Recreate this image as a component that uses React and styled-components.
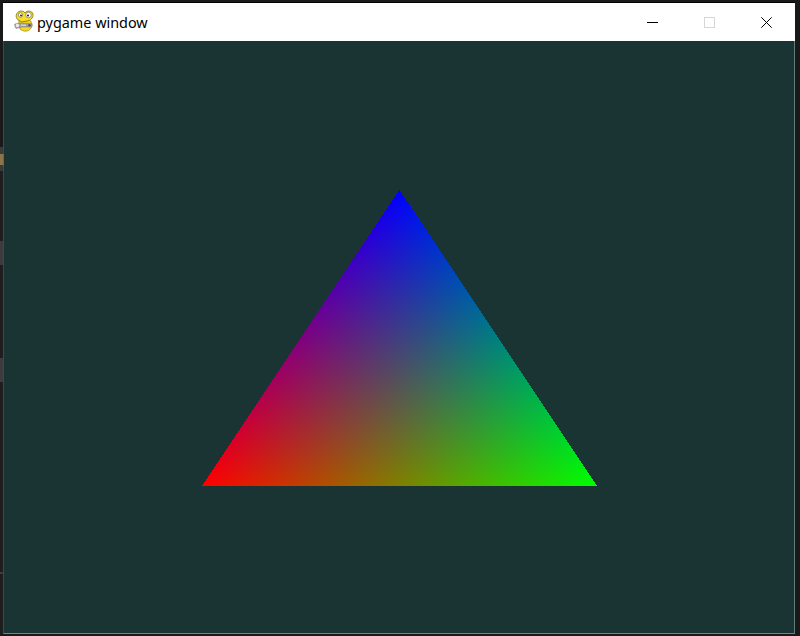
import React from "react";
import styled, {createGlobalStyle} from "styled-components";

const Global = createGlobalStyle`
    html, body { margin: 0; padding: 0; background: #1a1a1a; }
    body { font-family: "Noto Sans", "Open Sans", sans-serif; }
`

const Desktop = styled.div`
    width: 800px;
    height: 636px;
    display: flex;
    padding: 3px 5px 2px 0;
    box-sizing: border-box;
    background: #191919;
    overflow: hidden;
`
const BehindEdge = styled.div`
    width: 3px;
    flex: none;
    display: flex;
    flex-direction: column;
`
const EdgePiece = styled.div`
    height: ${p => p.$h}px;
    flex: none;
    background: ${p => p.$color};
`
const Win = styled.div`
    position: relative;
    flex: 1;
    display: flex;
    flex-direction: column;
    min-width: 0;
    border-left: 1px solid #2c5050;
    border-right: 1px solid #5f7d7c;
    border-bottom: 1px solid #6b8987;
    box-shadow: 0 -1px 0 #000;
`
const BorderGlint = styled.div`
    position: absolute;
    left: -1px;
    top: 151px;
    width: 1px;
    height: 12px;
    background: #3f6f8c;
`
const TitleBar = styled.div`
    height: 38px;
    flex: none;
    margin-left: -1px;
    margin-right: -1px;
    display: flex;
    align-items: center;
    background: #fff;
    padding-left: 11px;
`
const AppIcon = styled.svg`
    width: 20px;
    height: 22px;
    flex: none;
    margin-top: -2px;
`
const Title = styled.span`
    margin-left: 3px;
    font-size: 14.4px;
    color: #000;
    flex: 1;
`
const CaptionButton = styled.div`
    width: 57px;
    height: 38px;
    flex: none;
    display: flex;
    align-items: center;
    justify-content: center;
    svg { width: 11px; height: 11px; display: block; }
`
const Canvas = styled.div`
    flex: 1;
    display: flex;
    align-items: center;
    justify-content: center;
    padding: 2px 0 0 1px;
    background: #1a3333;
`
const Triangle = styled.svg`
    width: 395px;
    height: 296px;
    display: block;
    isolation: isolate;
    polygon { mix-blend-mode: plus-lighter; }
`

const edges = [
    {h: 144, color: "#191919"},
    {h: 7, color: "#3a3a3c"},
    {h: 11, color: "#8f7448"},
    {h: 6, color: "#3a3a3c"},
    {h: 70, color: "#1e1e1e"},
    {h: 24, color: "#3c3c3e"},
    {h: 93, color: "#1e1e1e"},
    {h: 24, color: "#3c3c3e"},
    {h: 190, color: "#1e1e1e"},
    {h: 2, color: "#3c3c3e"},
    {h: 60, color: "#1e1e1e"},
]

const POINTS = "197.5,0 0,296 395,296"

export default function App(){
    return(
    <>
    <Global/>
    <Desktop>
        <BehindEdge>
            {edges.map((e, i) => <EdgePiece key={i} $h={e.h} $color={e.color}/>)}
        </BehindEdge>
        <Win>
            <BorderGlint/>
            <TitleBar>
                <AppIcon viewBox="0 0 20 22">
                    <path d="M5 15 C4 11 6 9 8 9 L14 9 C18 11 19 15 17 18 C15 22 9 22 6 19 Z" fill="#f6d91c" stroke="#8a7410" strokeWidth=".6"/>
                    <path d="M4 10 C1 7 2 3 5 1.5 C7 .5 10 1 11 3 C13 0 18 .5 19 4 C19.5 8 16 11 13 11 L8 12 Z" fill="#f8e020" stroke="#6e5c0c" strokeWidth=".7"/>
                    <circle cx="6.5" cy="5" r="2.2" fill="#fff" stroke="#444" strokeWidth=".5"/>
                    <circle cx="14.5" cy="5" r="2.8" fill="#fff" stroke="#444" strokeWidth=".5"/>
                    <circle cx="7" cy="5.4" r=".9" fill="#111"/>
                    <circle cx="14" cy="5.4" r="1" fill="#111"/>
                    <path d="M.8 14 L6 13 L17 13.5 C18.5 14 18.5 16 17.5 17 L8 17 L2 18.5 C1 17.5 .4 15 .8 14 Z" fill="#a3a19b" stroke="#6a6864" strokeWidth=".4"/>
                    <circle cx="3.4" cy="15.5" r="1.7" fill="#efefea"/>
                    <circle cx="15.5" cy="15.2" r="1.3" fill="#6a4a48"/>
                    <path d="M7 15.2 h5" stroke="#ecece8" strokeWidth="1"/>
                </AppIcon>
                <Title>pygame window</Title>
                <CaptionButton>
                    <svg viewBox="0 0 11 11"><path d="M0 5.5 H11" stroke="#000" strokeWidth="1"/></svg>
                </CaptionButton>
                <CaptionButton>
                    <svg viewBox="0 0 11 11"><rect x=".5" y=".5" width="10" height="10" fill="none" stroke="#d6d6d6"/></svg>
                </CaptionButton>
                <CaptionButton>
                    <svg viewBox="0 0 11 11"><path d="M.3 .3 L10.7 10.7 M10.7 .3 L.3 10.7" stroke="#000" strokeWidth="1"/></svg>
                </CaptionButton>
            </TitleBar>
            <Canvas>
                <Triangle viewBox="0 0 395 296" shapeRendering="crispEdges">
                    <defs>
                        <linearGradient id="red" gradientUnits="userSpaceOnUse" x1="0" y1="296" x2="273.32" y2="113.63">
                            <stop offset="0" stopColor="#ff0000"/>
                            <stop offset="1" stopColor="#000000"/>
                        </linearGradient>
                        <linearGradient id="green" gradientUnits="userSpaceOnUse" x1="395" y1="296" x2="121.68" y2="113.63">
                            <stop offset="0" stopColor="#00ff00"/>
                            <stop offset="1" stopColor="#000000"/>
                        </linearGradient>
                        <linearGradient id="blue" gradientUnits="userSpaceOnUse" x1="197.5" y1="0" x2="197.5" y2="296">
                            <stop offset="0" stopColor="#0000ff"/>
                            <stop offset="1" stopColor="#000000"/>
                        </linearGradient>
                    </defs>
                    <polygon points={POINTS} fill="url(#red)"/>
                    <polygon points={POINTS} fill="url(#green)"/>
                    <polygon points={POINTS} fill="url(#blue)"/>
                </Triangle>
            </Canvas>
        </Win>
    </Desktop>
    </>
    )
}
